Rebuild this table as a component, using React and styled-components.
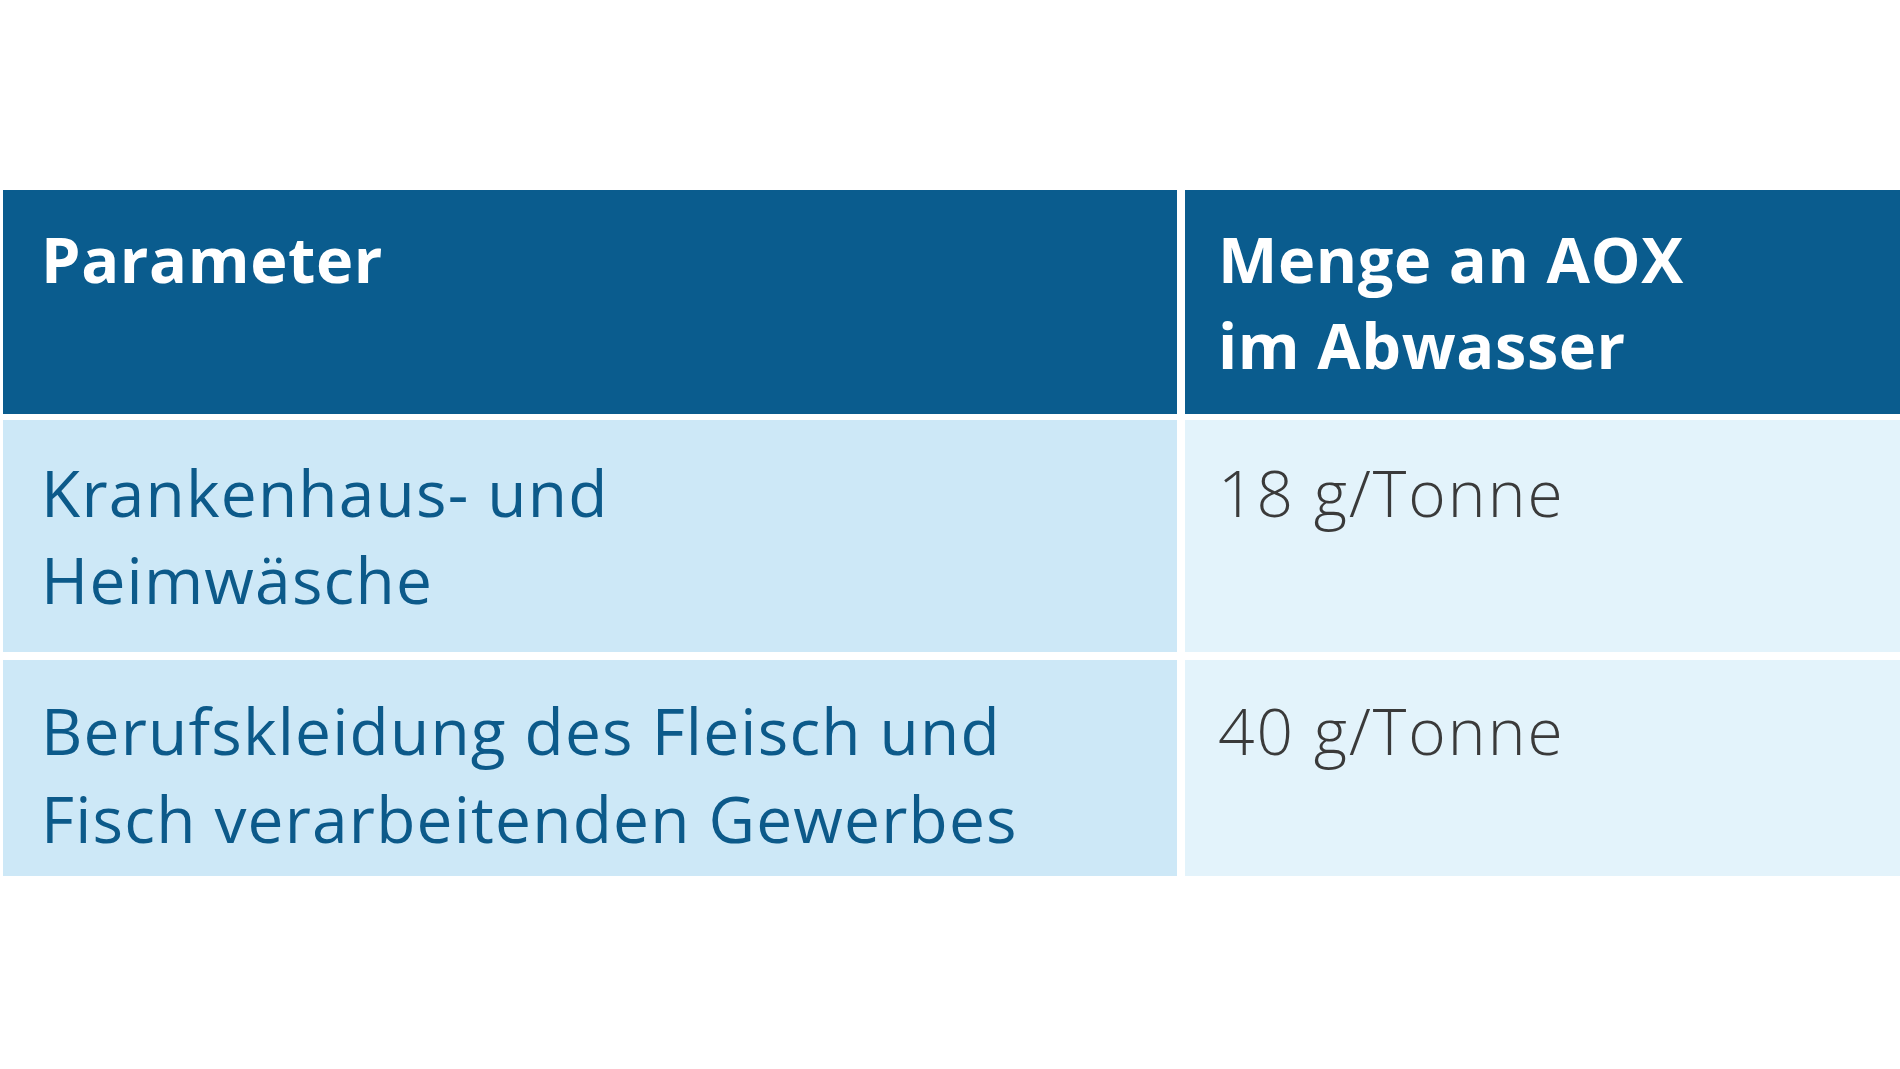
import React from "react";
import styled, { createGlobalStyle } from "styled-components";

const Global = createGlobalStyle`
  html, body { margin: 0; padding: 0; background: #ffffff; }
  body { font-family: "Open Sans", "Noto Sans", sans-serif; }
`;

const Page = styled.div`
  width: 1900px;
  height: 1069px;
  padding: 190px 0 0 3px;
  box-sizing: border-box;
  overflow: hidden;
`;

const Table = styled.div`
  display: grid;
  grid-template-columns: 1174px 715px;
  column-gap: 8px;
`;

const Row = styled.div`
  display: contents;
`;

const Cell = styled.div`
  box-sizing: border-box;
  height: ${(p) => p.$h}px;
  padding: ${(p) => p.$pt}px 20px 0 ${(p) => p.$pl}px;
  font-size: 64px;
  line-height: ${(p) => p.$lh}px;
  white-space: nowrap;
`;

const HeadCell = styled(Cell)`
  background: #0a5c8e;
  color: #ffffff;
  font-weight: 700;
  font-size: 63px;
  letter-spacing: 0.6px;
`;

const NameCell = styled(Cell)`
  background: #cde8f7;
  color: #0c5a8a;
  font-weight: 400;
  letter-spacing: 1.2px;
`;

const ValueCell = styled(Cell)`
  background: #e3f3fb;
  color: #3a3a3a;
  font-weight: 300;
  letter-spacing: 2px;
`;

const Spacer = styled.div`
  grid-column: 1 / -1;
  height: ${(p) => p.$h}px;
`;

const rows = [
  { name: ["Krankenhaus- und", "Heimwäsche"], value: "18 g/Tonne", h: 232, pt: 29, lh: 87 },
  { name: ["Berufskleidung des Fleisch und", "Fisch verarbeitenden Gewerbes"], value: "40 g/Tonne", h: 216, pt: 27, lh: 88 },
];

export default function App() {
  return (
    <>
      <Global />
      <Page>
        <Table>
          <Row>
            <HeadCell $h={224} $pt={26} $lh={86} $pl={38}>Parameter</HeadCell>
            <HeadCell $h={224} $pt={26} $lh={86} $pl={33}>
              Menge an AOX
              <br />
              im Abwasser
            </HeadCell>
          </Row>
          <Spacer $h={6} />
          {rows.map((r, i) => (
            <React.Fragment key={i}>
              <Row>
                <NameCell $h={r.h} $pt={r.pt} $lh={r.lh} $pl={38}>
                  {r.name[0]}
                  <br />
                  {r.name[1]}
                </NameCell>
                <ValueCell $h={r.h} $pt={r.pt} $lh={r.lh} $pl={33}>{r.value}</ValueCell>
              </Row>
              {i < rows.length - 1 && <Spacer $h={8} />}
            </React.Fragment>
          ))}
        </Table>
      </Page>
    </>
  );
}
